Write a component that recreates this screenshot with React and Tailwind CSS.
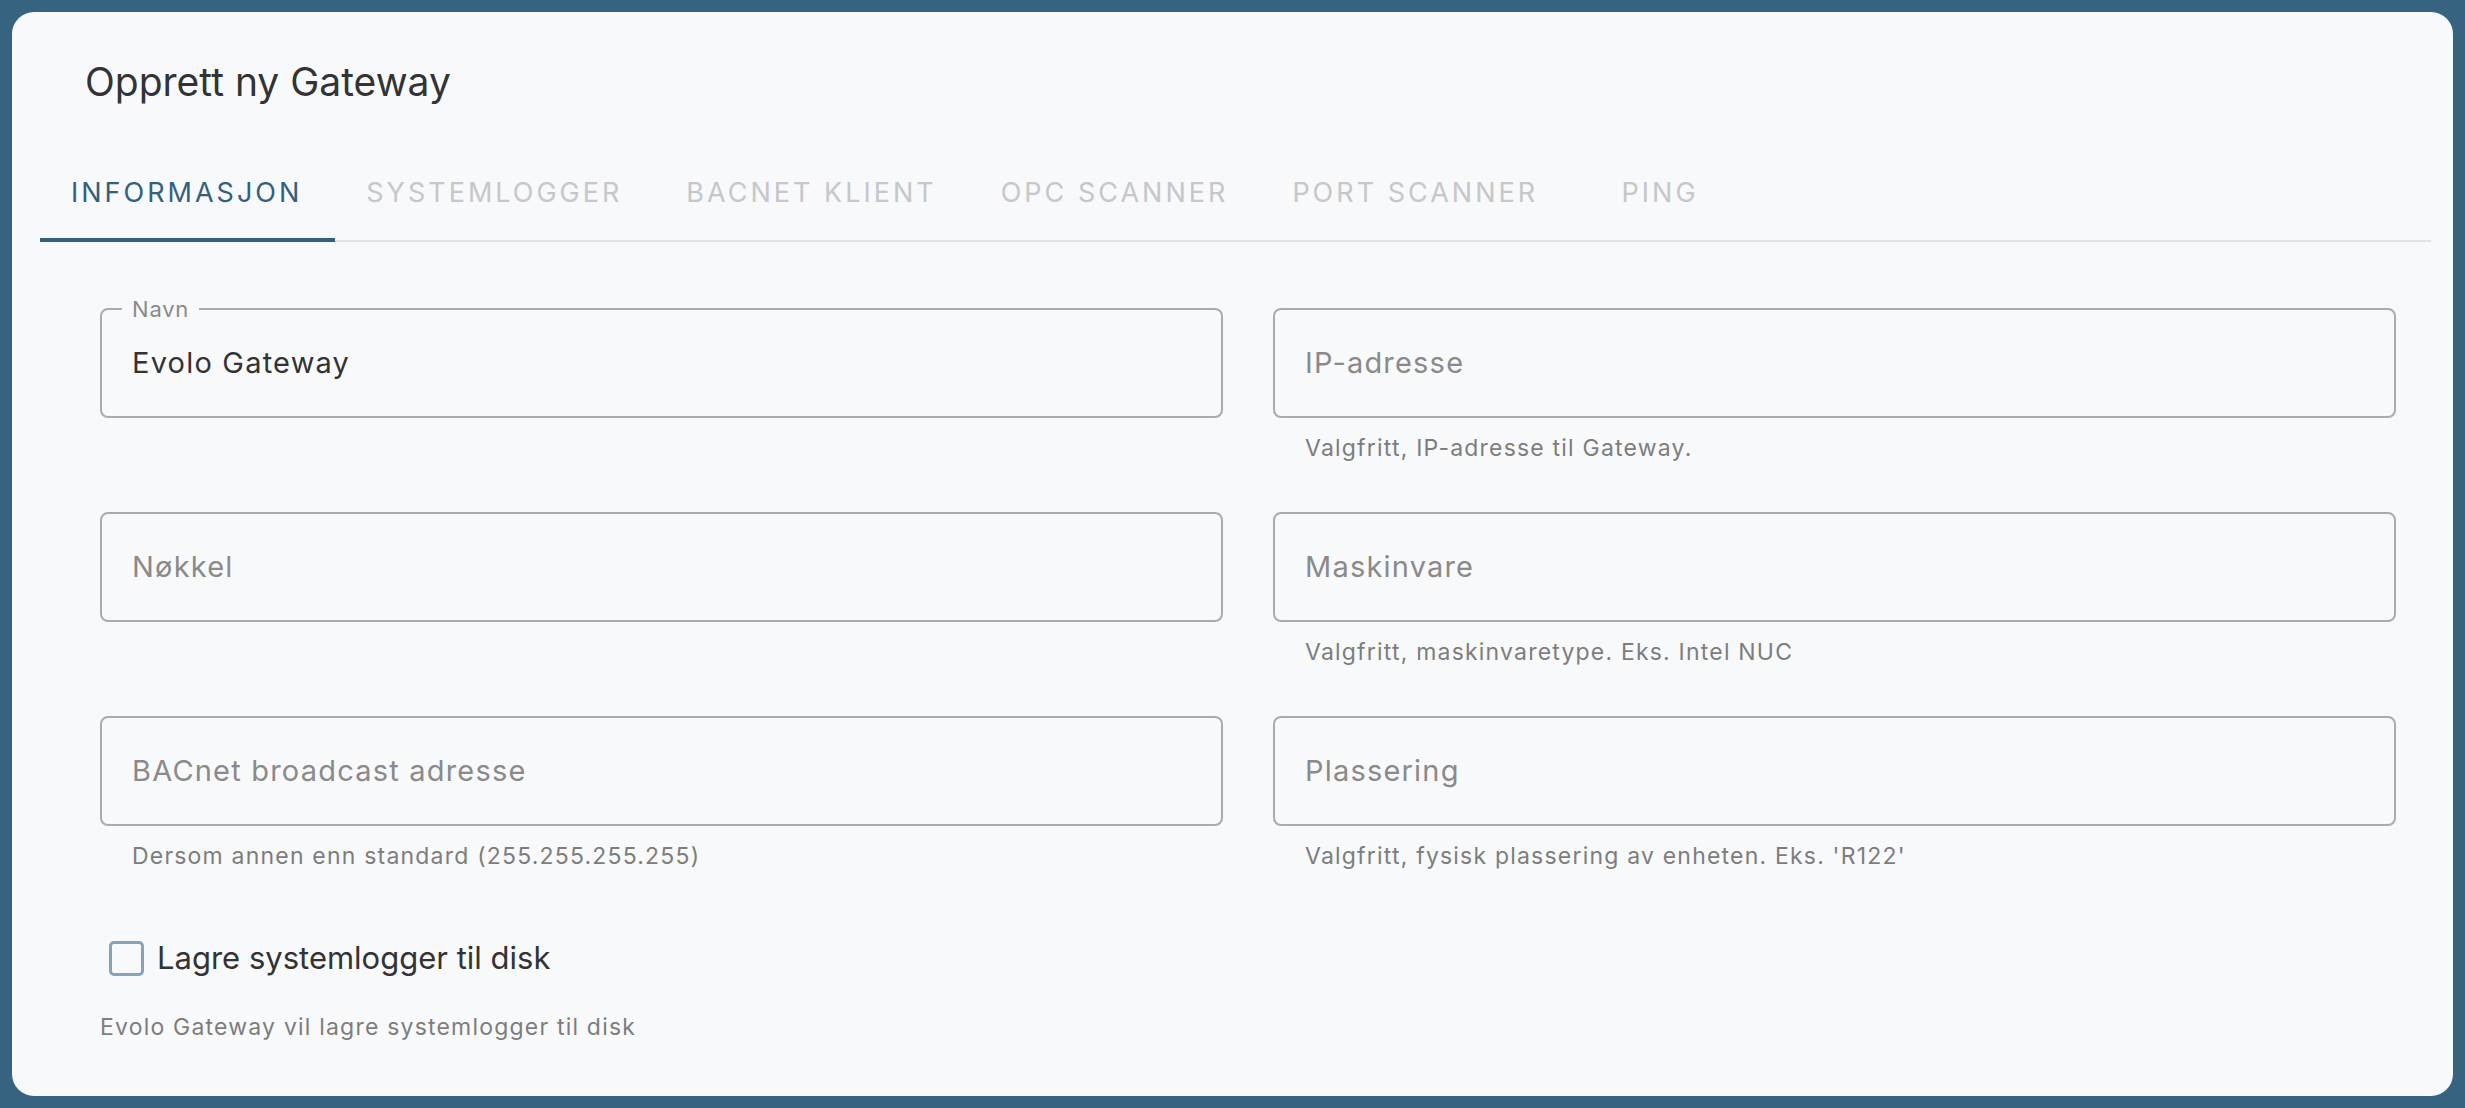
import { useState } from 'react'

const tabs = ['Informasjon', 'Systemlogger', 'BACnet klient', 'OPC scanner', 'Port scanner', 'Ping']

function Field({ label, value, placeholder, helper }) {
  return (
    <div className="flex flex-col">
      <div className="relative h-[110px] rounded-[8px] border-2 border-[#ababab] flex items-center px-[30px]">
        {label && (
          <span className="absolute top-[-12px] left-[20px] px-[10px] bg-[#f8f9fb] text-[22px] leading-[22px] tracking-[0.8px] text-[#8a8a8a]">
            {label}
          </span>
        )}
        {value ? (
          <span className="text-[29px] tracking-[1.2px] text-[#333333]">{value}</span>
        ) : (
          <span className="text-[29px] tracking-[1.2px] text-[#8a8a8a]">{placeholder}</span>
        )}
      </div>
      <p className="mt-[15px] h-[30px] px-[32px] text-[23px] leading-[30px] tracking-[1.2px] text-[#7d7d7d]">
        {helper}
      </p>
    </div>
  )
}

export default function App() {
  const [active, setActive] = useState(0)
  const [checked, setChecked] = useState(false)

  return (
    <div className="h-[1108px] w-full bg-[#36637f] p-[12px] font-['Inter',sans-serif]">
      <div className="h-full rounded-[22px] bg-[#f8f9fb] pt-[46px] pl-[28px] pr-[22px]">
        {/* Title */}
        <h1 className="pl-[45px] text-[39px] leading-[48px] font-normal text-[#333333]">
          Opprett ny Gateway
        </h1>

        {/* Tabs */}
        <div className="mt-[40px] flex h-[96px] border-b-2 border-[#e1e3e6]">
          {tabs.map((t, i) => (
            <button
              key={t}
              onClick={() => setActive(i)}
              className={`relative h-[95px] min-w-[180px] pl-[31px] pr-[33px] flex items-center justify-center uppercase text-[27px] tracking-[3px] ${
                active === i ? 'text-[#33607e]' : 'text-[#c5c7ca]'
              }`}
            >
              {t}
              {active === i && (
                <span className="absolute bottom-[-1px] left-0 right-0 h-[4px] bg-[#33607e]" />
              )}
            </button>
          ))}
        </div>

        {/* Form */}
        <div className="pt-[66px] pl-[60px] pr-[35px]">
          <div className="grid grid-cols-2 gap-x-[50px] gap-y-[49px]">
            <Field label="Navn" value="Evolo Gateway" />
            <Field placeholder="IP-adresse" helper="Valgfritt, IP-adresse til Gateway." />
            <Field placeholder="Nøkkel" />
            <Field placeholder="Maskinvare" helper="Valgfritt, maskinvaretype. Eks. Intel NUC" />
            <Field placeholder="BACnet broadcast adresse" helper="Dersom annen enn standard (255.255.255.255)" />
            <Field placeholder="Plassering" helper="Valgfritt, fysisk plassering av enheten. Eks. 'R122'" />
          </div>

          <label className="mt-[63px] flex h-[48px] items-center cursor-pointer">
            <span
              onClick={() => setChecked(!checked)}
              className={`ml-[9px] h-[35px] w-[35px] rounded-[5px] border-[3px] border-[#86a4b7] ${
                checked ? 'bg-[#33607e]' : ''
              }`}
            />
            <span className="ml-[13px] text-[31px] text-[#333333]">Lagre systemlogger til disk</span>
          </label>

          <p className="mt-[30px] text-[23px] leading-[30px] tracking-[1.2px] text-[#7d7d7d]">
            Evolo Gateway vil lagre systemlogger til disk
          </p>
        </div>
      </div>
    </div>
  )
}
